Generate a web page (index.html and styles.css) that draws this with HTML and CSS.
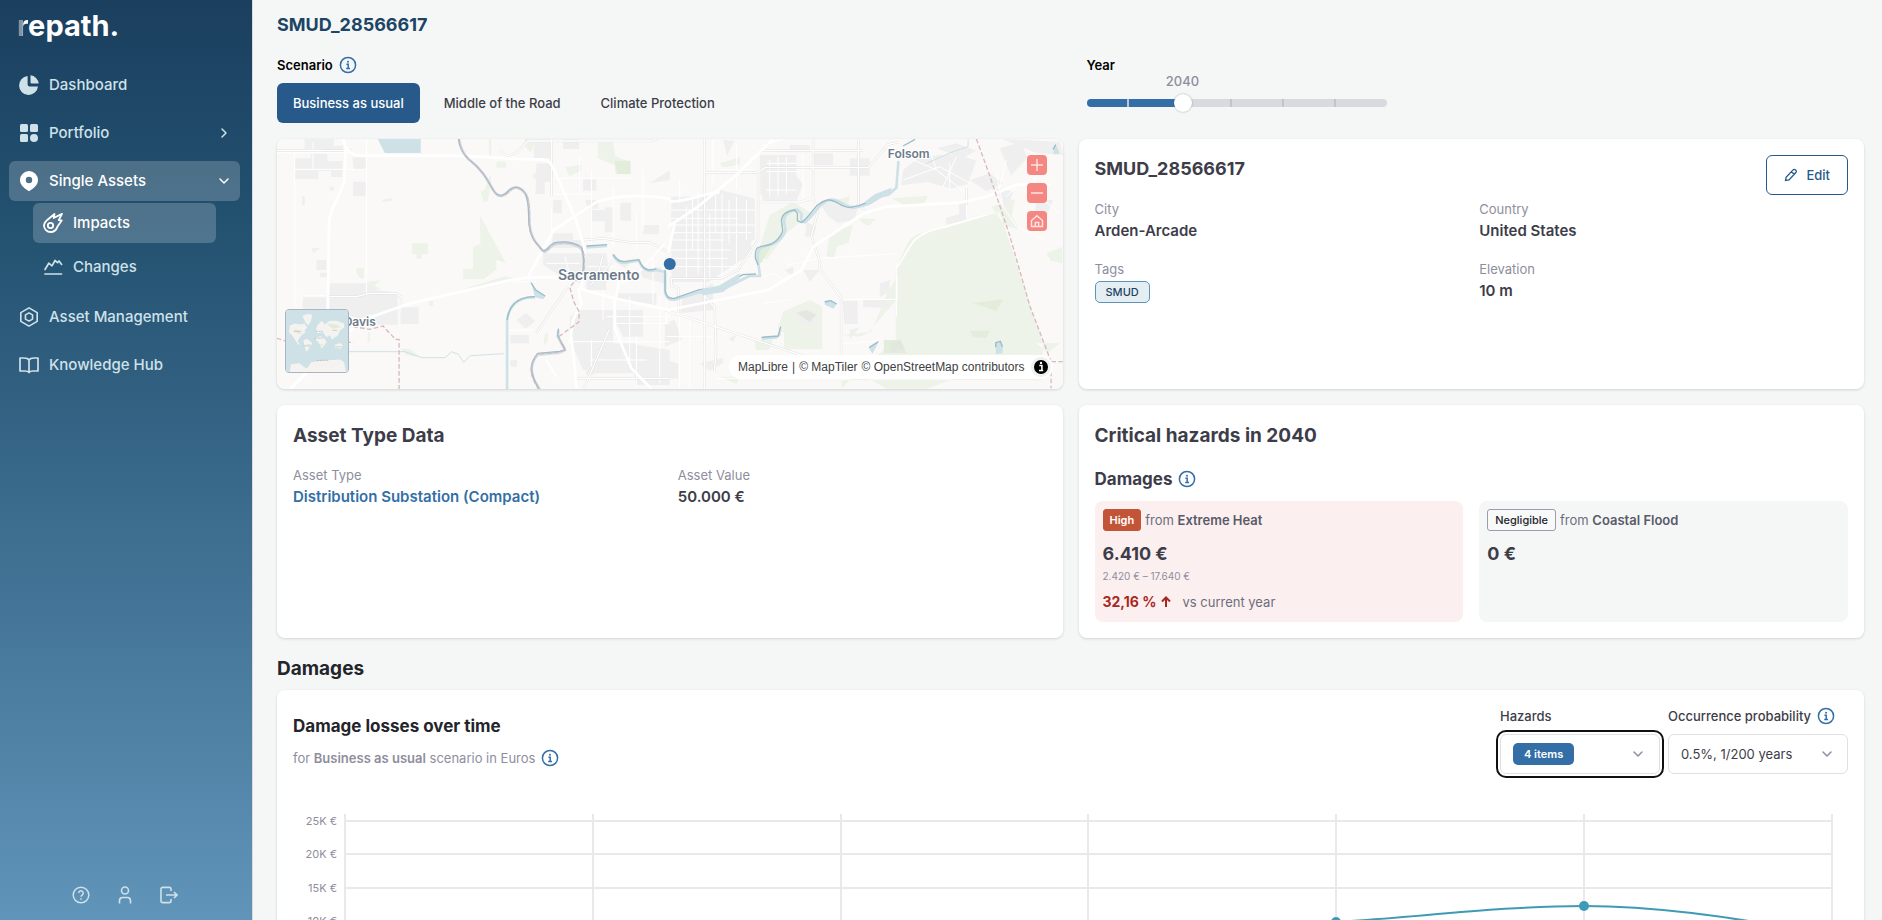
FILE: index.html
```html
<!DOCTYPE html>
<html lang="en">
<head>
<meta charset="utf-8">
<meta name="viewport" content="width=device-width, initial-scale=1">
<title>SMUD_28566617</title>
<link rel="stylesheet" href="styles.css">
</head>
<body>
<svg class="defs" aria-hidden="true">
  <symbol id="info" viewBox="0 0 18 18"><g fill="none" stroke="currentColor" stroke-width="1.5"><circle cx="9" cy="9" r="7.6"/><path d="M7.4 8.3h1.8v4.2M7.2 12.5h3.8"/></g><circle cx="9" cy="5.7" r="1" fill="currentColor"/></symbol>
  <symbol id="chevron" viewBox="0 0 12 12"><path d="M2 4l4 4 4-4" fill="none" stroke="currentColor" stroke-width="1.5" stroke-linecap="round" stroke-linejoin="round"/></symbol>
</svg>
<div class="app">
  <aside class="sidebar">
    <a class="logo" href="#"><span class="logo-r">r</span>epath.</a>
    <nav class="nav">
      <a class="nav-item" href="#"><svg class="nav-icon" viewBox="0 0 20 20"><path d="M8.6 1A9.5 9.5 0 1 0 19 11.4H10.4a1.8 1.8 0 0 1-1.8-1.8z" fill="currentColor"/><path d="M11.5.3A9.4 9.4 0 0 1 19.7 8.5H12.5a1 1 0 0 1-1-1z" fill="currentColor"/></svg>Dashboard</a>
      <a class="nav-item" href="#"><svg class="nav-icon" viewBox="0 0 20 20" fill="currentColor"><rect x="1" y="1" width="8" height="8" rx="1.5"/><rect x="11" y="1" width="8" height="8" rx="1.5"/><rect x="1" y="11" width="8" height="8" rx="1.5"/><circle cx="15" cy="15" r="4"/></svg>Portfolio<svg class="nav-arrow side" viewBox="0 0 12 12"><use href="#chevron"/></svg></a>
      <div class="nav-group">
        <a class="nav-item active" href="#"><svg class="nav-icon" viewBox="0 0 20 20"><path fill-rule="evenodd" d="M10 0a9 9 0 0 0-9 9c0 4.300 3.200 7.200 6 9.300L10 20.200l3-1.900c2.800-2.100 6-5 6-9.300a9 9 0 0 0-9-9zm0 5.800a3.200 3.200 0 1 1 0 6.400 3.200 3.200 0 0 1 0-6.400z" fill="currentColor"/></svg>Single Assets<svg class="nav-arrow" viewBox="0 0 12 12"><use href="#chevron"/></svg></a>
        <div class="subnav">
          <a class="nav-item active" href="#"><svg class="nav-icon" viewBox="0 0 20 20" fill="none" stroke="currentColor" stroke-width="1.800" stroke-linejoin="round"><path d="M1 12.500C1 10 2.500 8.500 4.500 6.700L11.500 1l-.8 4L19 .9l-3.300 6.300 3 .2-4.200 6.200C13.500 16.500 11 19 7.500 19 4 19 1 16 1 12.500z"/><circle cx="7.500" cy="12.500" r="2.700"/></svg>Impacts</a>
          <a class="nav-item" href="#"><svg class="nav-icon" viewBox="0 0 20 20" fill="none" stroke="currentColor" stroke-width="1.700" stroke-linecap="round" stroke-linejoin="round"><path d="M2 12.500l3.800-6.300 3.200 2.600L12 3.500l2.500 2.200L16 4l2.600 3.400M2 17h16.500"/></svg>Changes</a>
        </div>
      </div>
      <a class="nav-item" href="#"><svg class="nav-icon" viewBox="0 0 20 22" fill="none" stroke="currentColor" stroke-width="1.800" stroke-linejoin="round"><path d="M10 1l9 5.200v9.600L10 21l-9-5.200V6.200z"/><path d="M10 6.500l3.900 2.200v4.600L10 15.500l-3.900-2.200V8.700z"/></svg>Asset Management</a>
      <a class="nav-item" href="#"><svg class="nav-icon" viewBox="0 0 20 20" fill="none" stroke="currentColor" stroke-width="1.700" stroke-linejoin="round"><path d="M10 5C9 3.300 7 3 5 3H1v13h5c2 0 3.300.4 4 1.500.7-1.100 2-1.500 4-1.500h5V3h-4c-2 0-4 .3-5 2zM10 5v12"/></svg>Knowledge Hub</a>
    </nav>
    <div class="side-tools">
      <button class="tool" aria-label="Help"><svg viewBox="0 0 18 18" fill="none" stroke="currentColor" stroke-width="1.500"><circle cx="9" cy="9" r="7.800"/><path d="M6.800 7a2.200 2.200 0 1 1 3.500 1.800C9.300 9.500 9 9.800 9 10.700M9 12.300v1.500"/></svg></button>
      <button class="tool" aria-label="Account"><svg viewBox="0 0 18 18" fill="none" stroke="currentColor" stroke-width="1.600"><circle cx="9" cy="4.500" r="3.500"/><path d="M3.500 17.500v-2.700c0-2 1-3.300 3-3.300h5c2 0 3 1.300 3 3.300v2.700"/></svg></button>
      <button class="tool" aria-label="Log out"><svg viewBox="0 0 18 18" fill="none" stroke="currentColor" stroke-width="1.600"><path d="M11 5V3.200C11 2 10.400 1.400 9.200 1.400H2.800C1.600 1.400 1 2 1 3.200v11.600c0 1.200.6 1.800 1.800 1.800h6.400c1.200 0 1.800-.6 1.800-1.800V13M6 9h10.500M14 6l3 3-3 3"/></svg></button>
    </div>
  </aside>

  <main class="main">
    <h1 class="page-title">SMUD_28566617</h1>
    <section class="filters">
      <div>
        <div class="filter-label">Scenario <svg class="info"><use href="#info"/></svg></div>
        <div class="tabs">
          <button class="tab selected">Business as usual</button>
          <button class="tab">Middle of the Road</button>
          <button class="tab">Climate Protection</button>
        </div>
      </div>
      <div class="year">
        <label class="filter-label" for="year">Year</label>
        <div class="slider">
          <output class="slider-value" for="year">2040</output>
          <input class="range" id="year" type="range" min="2022" max="2080" value="2040">
        </div>
      </div>
    </section>

    <section class="cards">
      <article class="card map">
        <svg class="map-art" viewBox="0 0 786 250" preserveAspectRatio="xMidYMid slice" aria-hidden="true">
          <g transform="translate(-7 -9) scale(.33333)">
            <rect x="0" y="0" width="2400" height="800" fill="#fbf9f8"/>
            <g fill="#edf3e8">
              <path d="M630 255l78 143-28-8v28l-38 30h-62v-32h30v-66l22-8z"/>
              <path d="M426 340h48v32h-18v14h-16v-14h-14zM555 485l150-46 45 8-190 42zM288 455l46-4-20 16 22 10-50 2zM340 208l24-4 6 8-34 4zM657 27h8v62l-8-20zM765 27h26v30l-10 10-16-20zM680 95h28v18h-28zM664 130l-20 50-12 5 10 32 12-4 10-46zM790 130h24v16h-24zM260 414h22v30h-10l-12-14zM126 354h24l-20 18zM960 565l20 8v22l-20-8zM950 712l34-4-10 26-26 2zM825 612l10-6-2 30-12 10zM985 35h45l6 42 46 20v36h-44l-4-28-50-20zM888 112l48-8-2 18-36 16zM390 655l30 2 35 26-45-8zM294 606h6v32h-6zM478 512h12v16h-12zM1035 395l60-10-30 30z"/>
              <path d="M2190 247l-180 48c-35 10-70 10-95 40l-37 80v215l-60 50-103 95v-24h600L2320 640zM1540 545l80-35 38 20v128h-115v-50l-20-10zM1680 310l70-26-14 55-34 10-10 36-22-6zM1500 255l70-40 55 35-75 60-60 80-25-25zM1205 250l60-42 70-20-80 60-50 20zM1865 205l110-8-10 20-50 14zM1768 265l50 2-20 20-20-8zM2205 75l50-40 18 50-40 40zM2165 230l70-22-8 50 20 40-40-10zM2330 370l48-20v50l-35-8zM1715 615l90-10 45-110 34-60v70l-90 105-24 10zM1455 630h55l-12 30h-40zM1670 218l70-20-5 30-55 10zM1350 100l60-18v22l-50 8zM1800 748h250l-80 28h-120zM2300 640l70 0-35 30zM1350 740h60l-10 22z"/>
            </g>
            <g fill="#e2eedb"><path d="M1034 92h48v40h-40zM1460 352h42l-28 48-14-6zM1842 630h40l30 40h-70zM2110 520l90-12-20 36zM2100 602h60l-10 22-40-2zM960 568h18v18h-18z"/></g>
            <g fill="#efeff0">
              <path d="M104 27h88v20h28v20h-60v-10h-56zM75 85h48v-14h50v22h45v48h-34v-18h-38v24h-70zM248 82h40v38h-36zM250 155h38v44h-38zM97 198h8v28h-8zM140 390h30v30h-30zM150 428h22v14h-22zM180 170h12v12h-12zM100 502h70v34h-36l-10 14-26-16zM180 460h110l30 20 64 8v96h-70v-30h-20l-20 12-96-20zM392 532h55v50h-55z"/>
              <path d="M792 27h52v58h-52zM800 100h45v56h-20v36h-28zM880 27h48v30h-48zM850 210h26v40h-26zM940 148h40v34h-40zM946 210h40v26h-30zM965 240h40v34h-40zM1005 232h25v75h-25zM1052 218h32v54h-32zM850 310h60v20h34v24h-100zM820 370h120v90l-50-10-70-45zM920 370h90l10 70h-70zM950 440h60v40h-60zM1040 490h120v35l-120-20zM900 560l30-20h100v180h-90l-40-90zM1040 540h80v80h-60l-20-40zM950 640h150v90H950zM722 615h56v25h-56zM740 570l30-22 26 26-28 22zM1070 640l130 20v105h-100zM722 690h20v20h-20zM1110 420l60-10 20 22v30l-70-18zM1120 285h48v28h-48zM1140 160l60-40v30z"/>
              <path d="M1205 200h110l30-22 110 28v120l-130 100-110 16-10-130zM1205 340h150l90-10v40l-130 86h-110zM1240 500l90-40v80l-100 10zM1350 200h50v90h-50zM1470 75h110v64l20 24-20 50h-90l-18-20zM1478 150h95v60h-95zM1560 45h60v22h-60zM1630 70h60v36h-60zM1740 85h60v52h-60zM1650 220l60-5 55 14-10 40-50 10-30-20zM1610 275l30 15-10 30h-24zM1900 120l50-40 110-8 60 20-26 70-50 14-70-20-80 10zM2000 55l60-15 60 22-40 22zM2090 220v50l-60 14-2-20 40-12v-32zM2100 150l60-20 40 30-50 24zM2190 55l60-18 20 40-46 60zM2180 175l50 10-20 60zM2270 160h40v46l-35-10zM2300 210h50l-20 50-35-10zM2200 27l170 8 10 40-80-6zM1575 545l50-8 20 18-22 30-36-10zM1718 512h46v70h-40zM1780 510h65l15 25-80-4zM1830 460l30-10v35l-30 16zM1740 600l30-8-30 36zM1600 420h50l-30 36zM1545 420l25-10v30zM1376 625l24-10-10 22zM1185 580l30-10 22 60-52 20zM1185 690l40 10v46h-40zM1290 700l70-16v16l-40 22zM1360 30l34 2-22 46z"/>
            </g>
            <g fill="#e3e8df"><path d="M1862 640l30-12 14 30-40 10z"/><path d="M1580 548l30-8 30 14-20 22z"/></g>
            <g fill="none" stroke="#fff" stroke-width="3">
              <path d="M75 60v465M130 35v85M290 27v470M75 118h215M100 497h75M21 68h230M845 145h240M845 192h120M845 235v65M965 120v240M1030 170v180M930 80v110M1100 250v110M1120 120v180M900 635h300M960 690h170M1035 580h165M965 630v80M1000 480v90M1080 500v200M1100 620v155M760 500h60M730 455h70M720 600h70M885 380l20 70M830 400h100M950 410h90M1010 560h190M1150 380v140M1170 500v260"/>
              <path d="M1205 240h250M1205 265h200M1205 285h250M1250 230v220M1268 210v150M1285 180v250M1320 250v200M1338 190v120M1357 190v270M1378 210v130M1400 200v200M1430 210v120M1205 308h240M1205 330h160M1205 360h180M1205 385h170M1210 410h220M1350 120h110M1230 150v70M1400 40v140M1330 27v130M1500 90v110M1525 80v120M1550 80v110M1600 60v160M1490 100h90M1490 125h100M1490 180h90M1620 60h70M1190 480v100M1230 510v265M1260 560v215M1190 620h140M1480 520l80-10M1550 405l100-20 230-14M1880 400v160M1720 508h165M1715 640l110-6M2090 200v60M2040 180v-80M1930 90l70 30 90 70M1980 60l20 60M2060 80l-40 90M1900 150l110-40 90 50M2180 130l20 100 40 60 80 40M2210 90l-20 80M2250 160l-40 40M2290 130l20 70 60 50M1700 745h500M1340 745h400M1540 450l-30-20-30 10"/>
            </g>
            <g fill="none" stroke="#e1e1e1" stroke-width="7">
              <path d="M21 62h226M170 500h90l40-10h80l14 10v50M690 60l20 18 30-10 35-35h370l20-8M940 330l60-5 80 12h60l60 32M1000 375l-16 60-20 30M1042 375l-46 56M895 470l-70 100-25 40M1018 600l-75 175M845 27v170M1305 27v760M1630 27v180l15 35-20 75 26 80-2 20 65 85v220M1766 27v200l22 12M1305 127h160l20-14h310l60-70 30-6M1465 130v200l-60 90-50 26h-150v20l22 10v80M1300 490l35 45 4 130-5 60M1470 62h310M1470 216h120l40-12M2090 175v50M1185 540l500 165M915 745h285"/>
            </g>
            <g fill="none" stroke="#fff" stroke-width="4">
              <path d="M21 62h226M170 500h90l40-10h80l14 10v50M690 60l20 18 30-10 35-35h370l20-8M940 330l60-5 80 12h60l60 32M1000 375l-16 60-20 30M1042 375l-46 56M895 470l-70 100-25 40M1018 600l-75 175M845 27v170M1305 27v760M1630 27v180l15 35-20 75 26 80-2 20 65 85v220M1766 27v200l22 12M1305 127h160l20-14h310l60-70 30-6M1465 130v200l-60 90-50 26h-150v20l22 10v80M1300 490l35 45 4 130-5 60M1470 62h310M1470 216h120l40-12M2090 175v50M1185 540l500 165M915 745h285"/>
            </g>
            <g fill="none" stroke="#fff" stroke-width="8">
              <path d="M220 27c8 30 20 50 55 50h260c100 0 160 10 270 11 35 0 38 10 50 36l65 150 24 80-8 120M228 50l-4 100c-10 50-45 80-46 130l-4 260M62 777l60-60 150-145 150-52 300-70 60-8h100M772 445l80-145 130-85c60-20 150-22 218-8M925 475l110 30 160 35 300-60 100-60 36-70 60-40 90-60 70-20 220-12 80-18 90-36h100M1035 505v90l50 120 60 62M905 620l16 155M1200 215c60 0 110-28 150-28M1195 290l90-60 60-50 55-45 110-108M1195 370l20-90M1048 450l-10 60M900 640l10-70 25-50-10-45"/>
            </g>
            <path fill="none" stroke="#fff" stroke-width="5" d="M1185 340l-80 90-50 30M1880 415l50-80c30-30 60-35 100-45l120-35M830 690l30 50M1500 40l60-20"/>
            <path fill="#cde1e6" d="M324 27h129v42H345z"/>
            <g fill="none" stroke-linejoin="round">
              <path stroke="#cde1e6" stroke-width="8" d="M568 27c4 30 15 48 30 62 40 30 55 60 75 95 15 22 30 15 45 0 18-18 35-12 50 8 14 24 9 60 12 95 4 40 22 55 40 76 10 8 18-12 34-20 30-6 60-2 80 12 12 20 8 50 6 72M712 777V570c4-30 20-70 84-68M866 600l-2 20 22 40-16 8-66 6c-25 30-25 60 6 103M1030 375c10 18 20 24 35 24l42-8 8 16c15 20 30 18 45 13l26 6v60c4 20 12 24 28 23l75-22 60-4 90-45h32l-6-40c-6-40 6-48 30-52 35-5 50-35 52-45l-4-30c2-20 20-30 40-32l12 12v20l10 6c30-20 40-60 78-68 30-2 40 25 70 24 40-6 60-20 80-34l25-6 22-20 6-80M950 352l62-4"/>
              <path stroke="#9cbccb" stroke-width="4" d="M566 27c4 30 15 46 30 60 40 30 55 60 75 95 15 22 30 15 45 0 18-18 35-12 50 8 14 24 9 60 12 95 4 40 22 55 40 76 10 8 18-14 34-22 30-6 60-2 82 12 10 20 8 50 6 72"/>
              <path stroke="#9cbccb" stroke-width="4" d="M712 570c4-30 20-70 84-70M866 596l-2 20 22 44-16 4-66 6c-25 30-25 60 4 107M1030 373c10 18 20 22 35 22l42-6 8 16c15 20 30 16 45 11M1186 420v62c4 20 12 24 28 23l75-26 60-4 70-41 40-2M1465 405l-8-20c-2-34 6-34 30-38 35-5 50-35 52-45l-4-30c2-20 20-30 40-32l8 10v22l12 6c30-20 40-60 78-68 30-2 40 25 70 22 40-6 60-20 80-34l25-8M950 348l62-4M1900 48l36-20"/>
              <path stroke="#cde1e6" stroke-width="3" d="M236 665h170l50 18h70l20-18 20 8 16 24 20-20 100-6M1970 100l80-35 45-15v-22"/>
              <path stroke="#d9b9bd" stroke-width="4" stroke-dasharray="14 7" d="M568 27c4 30 15 48 30 62 40 30 55 60 75 95 15 22 30 15 45 0 18-18 35-12 50 8 14 24 9 60 12 95 4 40 22 55 40 76 10 8 18-14 34-22 30-6 60-2 82 12 10 20 8 50 6 72l-42 46 12 44 16 30v30l-62 46 22 38-20 8-66 6c-25 30-25 60 6 107M21 625l40 12h190M250 590l50 8 40-10 20 22 18 18h10v150M2120 27l40 110 60 180 60 210 64 168v80M2345 695h34"/>
            </g>
            <g fill="#cde1e6"><path d="M784 458l14 20 30 20-8 10-24-6zM1290 480l60-14 60-36v16l-50 40-60 10zM1785 215l30-22 50-20v14l-50 26-20 14zM1475 622l50-4 8-28v26l-12 10-44 4zM1665 512l18-2 18 12-10 14-26-12zM1798 655l28-20-8 18-10 18zM2178 640l14-8 8 16-2 22-20 2zM2350 55l8-12 12 28-18 2z"/></g>
            <g fill="none" stroke="#9cbccb" stroke-width="4"><path d="M784 458l14 22 28 18M1475 622l50-4 8-28M1665 516l18-4 18 10M1798 653l28-18M2178 652v-14l14-4 6 16M2350 58l8-14"/></g>
          </g>
          <g class="map-labels">
            <text x="322" y="141" font-size="14" text-anchor="middle">Sacramento</text>
            <text x="83" y="187" font-size="12" text-anchor="middle">Davis</text>
            <text x="632" y="19" font-size="12" text-anchor="middle">Folsom</text>
          </g>
          <circle cx="393" cy="125" r="6" fill="#336fa6"/>
        </svg>
        <svg class="minimap" viewBox="0 0 64 64" aria-hidden="true">
          <rect width="64" height="64" fill="#cde1e6"/>
          <g fill="#f4f3ef"><path d="M4 16l5-2 6 1 4-1 3 4-3 3 1 2-4 3-2 3-2 3 2 3-1 1-3-4-3-5-4-4zM17 6l5-2 5 1-1 6-3 5-3-3zM18 31l4-1 5 4-2 4-3 4-1 1-2-6zM31 19l2-4 4-4 3 4 5-4 7 0 8 3v4l-4 3-3 6-3 1-2 3-3-5-3 2-4-5-6 1zM31 28l5-1 4 3 2 3-3 4-2 3-3-6-3-3zM50 36l6-2 3 3-2 3-7-1zM4 64l1-8 9-1 5 4 3 1 4-6 12-2 18-1 4 3 2 10z"/></g>
          <g fill="#e4eadb"><path d="M8 20l6 1 2 4-5-1zM21 35l4 0-1 4zM42 14l10 1 5 3-9 1zM35 35l3 0-1 3z"/></g>
          <path fill="none" stroke="#a9aab2" stroke-width=".7" stroke-dasharray="1 .5" d="M8 22h8M31 22h7M48 21h5M30 29h8M18 37h7M50 38h9M32 52h12"/>
        </svg>
        <div class="map-tools">
          <button class="map-btn" aria-label="Zoom in"><svg viewBox="0 0 20 20"><path d="M4 10h12M10 4v12"/></svg></button>
          <button class="map-btn" aria-label="Zoom out"><svg viewBox="0 0 20 20"><path d="M4 10h12"/></svg></button>
          <button class="map-btn" aria-label="Reset view"><svg viewBox="0 0 20 20"><path d="M4.500 15.500V9.500L10 4.700l5.500 4.800v6zM8.300 15.500v-4h3.400v4"/></svg></button>
        </div>
        <div class="attribution"><a href="#">MapLibre</a> | <a href="#">© MapTiler</a> <a href="#">© OpenStreetMap contributors</a>
          <svg class="attribution-icon" viewBox="0 0 20 20"><circle cx="10" cy="10" r="10" fill="#f0f0f0"/><circle cx="10" cy="10" r="7" fill="#000"/><path d="M8.300 8.500h2.600v4.200M8 13.500h4.200" stroke="#fff" stroke-width="1.600" fill="none"/><circle cx="10" cy="5.900" r="1.200" fill="#fff"/></svg>
        </div>
      </article>

      <article class="card">
        <header class="card-head">
          <h2 class="asset-name">SMUD_28566617</h2>
          <button class="edit"><svg viewBox="0 0 14 14"><path d="M1.500 12.500l.6-3.200 6.700-7.200a1.900 1.900 0 0 1 2.900 2.600L5 11.900zM7.500 3.700l2.700 2.500"/></svg>Edit</button>
        </header>
        <dl class="facts">
          <div><dt>City</dt><dd>Arden-Arcade</dd></div>
          <div><dt>Country</dt><dd>United States</dd></div>
          <div><dt>Tags</dt><dd><span class="tag">SMUD</span></dd></div>
          <div><dt>Elevation</dt><dd>10 m</dd></div>
        </dl>
      </article>

      <article class="card">
        <h2 class="card-title">Asset Type Data</h2>
        <dl class="facts spaced">
          <div><dt>Asset Type</dt><dd><a class="link" href="#">Distribution Substation (Compact)</a></dd></div>
          <div><dt>Asset Value</dt><dd>50.000 €</dd></div>
        </dl>
      </article>

      <article class="card">
        <h2 class="card-title">Critical hazards in 2040</h2>
        <h3 class="subhead">Damages <svg class="info"><use href="#info"/></svg></h3>
        <div class="hazards">
          <section class="hazard high">
            <p class="hazard-top"><span class="badge">High</span><span>from <b>Extreme Heat</b></span></p>
            <p class="amount">6.410 €</p>
            <p class="interval">2.420 € – 17.640 €</p>
            <p class="change"><b>32,16 %</b><svg viewBox="0 0 12 12"><path d="M6 11V2M2 5.500L6 1.500l4 4"/></svg><span>vs current year</span></p>
          </section>
          <section class="hazard">
            <p class="hazard-top"><span class="badge outline">Negligible</span><span>from <b>Coastal Flood</b></span></p>
            <p class="amount">0 €</p>
          </section>
        </div>
      </article>
    </section>

    <h2 class="section-title">Damages</h2>
    <section class="card chart-card">
      <header class="chart-head">
        <div>
          <h3 class="chart-title">Damage losses over time</h3>
          <p class="chart-sub"><span>for <b>Business as usual</b> scenario in Euros</span><svg class="info"><use href="#info"/></svg></p>
        </div>
        <div class="controls">
          <div class="field hazards-field">
            <span class="field-label" id="hazards-label">Hazards</span>
            <button class="picker focused" aria-haspopup="listbox" aria-labelledby="hazards-label"><span class="chip">4 items</span><svg class="caret"><use href="#chevron"/></svg></button>
          </div>
          <div class="field probability-field">
            <label class="field-label" for="probability">Occurrence probability <svg class="info"><use href="#info"/></svg></label>
            <div class="picker-wrap"><select class="picker" id="probability"><option>0.5%, 1/200 years</option></select><svg class="caret"><use href="#chevron"/></svg></div>
          </div>
        </div>
      </header>
      <svg class="chart" viewBox="0 0 1555 210" role="img" aria-label="Damage losses over time">
        <g fill="none" stroke="#e9e9ea" stroke-width="2">
          <path d="M52 8H1540M52 41H1540M52 75H1540M52 108H1540M52 141H1540M52 174H1540"/>
          <path d="M52 1V174M300 1V174M548 1V174M795 1V174M1043 1V174M1291 1V174M1539 1V174"/>
        </g>
        <g class="axis" text-anchor="end"><text x="44" y="12">25K €</text><text x="44" y="45">20K €</text><text x="44" y="79">15K €</text><text x="44" y="112">10K €</text></g>
        <path d="M795 150C880 135 960 114 1043 109S1210 93 1291 93S1450 107 1539 121" fill="none" stroke="#3f9bb5" stroke-width="2"/>
        <g fill="#3f9bb5"><circle cx="1043" cy="109" r="5"/><circle cx="1291" cy="93" r="5"/></g>
      </svg>
    </section>
  </main>
</div>
</body>
</html>
```

FILE: styles.css
```css
* { box-sizing: border-box; }
body, h1, h2, h3, p, dl, dd { margin: 0; }
body {
  font-family: Inter, "Liberation Sans", sans-serif;
  font-size: 13px;
  line-height: 20px;
  color: #3d3d49;
  background: #f5f7f7;
}
a { color: inherit; text-decoration: none; }
button, select, input { font: inherit; }
button { cursor: pointer; }
.defs { display: none; }
.app { display: flex; height: 100vh; overflow: hidden; }

.sidebar {
  width: 253px;
  flex: none;
  display: flex;
  flex-direction: column;
  padding: 8px 12px 16px 9px;
  color: #cfe1e9;
  background: linear-gradient(#1b3f5f, #235170 24%, #316081 43%, #6094b9);
  border-right: 1px solid #d9dbe0;
}
.logo {
  height: 40px;
  margin: 0 0 17px 8px;
  color: #fff;
  font-size: 29px;
  font-weight: 700;
  line-height: 36px;
}
.logo-r {
  color: transparent;
  background: linear-gradient(90deg, #8194a5 45%, #fff 70%);
  background-clip: text;
  -webkit-background-clip: text;
}
.nav { display: flex; flex-direction: column; gap: 8px; }
.nav-item {
  display: flex;
  align-items: center;
  gap: 10px;
  height: 40px;
  padding: 0 10px;
  border-radius: 6px;
  font-size: 15px;
  font-weight: 500;
}
.nav-item.active { color: #fff; background: rgba(255, 255, 255, .2); }
.nav-icon { width: 20px; height: 20px; flex: none; overflow: visible; }
.nav-arrow { width: 12px; height: 12px; margin-left: auto; }
.nav-arrow.side { transform: rotate(-90deg); }
.subnav { display: flex; flex-direction: column; gap: 4px; padding: 2px 24px; }
.side-tools { display: flex; justify-content: center; gap: 26px; margin-top: auto; }
.tool { width: 18px; height: 18px; padding: 0; border: 0; color: inherit; background: none; }
.tool svg { display: block; width: 18px; height: 18px; }

.main { flex: 1; min-width: 0; padding: 11px 18px 0 24px; }
.page-title, .asset-name { font-size: 18px; font-weight: 700; line-height: 28px; }
.page-title { color: #1c4464; }
.info { width: 18px; height: 18px; flex: none; color: #336fa6; }
.filters { display: grid; grid-template-columns: 1fr 1fr; gap: 16px; padding: 16px 0; }
.filter-label { display: flex; align-items: center; gap: 6px; color: #000; font-weight: 600; }
.tabs { display: flex; gap: 8px; margin-top: 8px; }
.tab {
  height: 40px;
  padding: 0 16px;
  border: 0;
  border-radius: 6px;
  color: #3d3d49;
  background: none;
  font-weight: 500;
}
.tab.selected { color: #fff; background: #275a8a; }
.year { padding-left: 8px; }
.slider { display: grid; width: 300px; }
.slider-value {
  width: 36px;
  margin: -4px 0 0 78px;
  color: #8e8e9d;
  text-align: center;
  font-weight: 500;
}
.range { width: 100%; height: 20px; margin: 2px 0 0; appearance: none; -webkit-appearance: none; background: none; }
.range::-webkit-slider-runnable-track {
  height: 8px;
  border-radius: 4px;
  background:
    linear-gradient(#c3c3cb, #c3c3cb) 40px 0 / 2px 8px no-repeat,
    linear-gradient(#c3c3cb, #c3c3cb) 143px 0 / 2px 8px no-repeat,
    linear-gradient(#c3c3cb, #c3c3cb) 195px 0 / 2px 8px no-repeat,
    linear-gradient(#c3c3cb, #c3c3cb) 247px 0 / 2px 8px no-repeat,
    linear-gradient(#336fa6, #336fa6) 0 0 / 96px 8px no-repeat,
    #d9dadf;
}
.range::-webkit-slider-thumb {
  -webkit-appearance: none;
  width: 18px;
  height: 18px;
  margin-top: -5px;
  border-radius: 50%;
  background: #fff;
  box-shadow: 0 0 2px rgba(0, 0, 0, .35);
}

.cards { display: grid; grid-template-columns: 1fr 1fr; grid-template-rows: minmax(250px, auto) auto; gap: 16px; }
.card {
  position: relative;
  min-width: 0;
  padding: 16px;
  border-radius: 8px;
  background: #fff;
  box-shadow: 0 1px 3px rgba(0, 0, 0, .14);
}
.card-head { display: flex; justify-content: space-between; margin-bottom: 4px; }
.card-title { font-size: 19px; font-weight: 700; line-height: 30px; }
.facts { display: grid; grid-template-columns: 1fr 1fr; gap: 16px; }
.facts.spaced { margin-top: 14px; }
.facts dt { color: #8e8e9d; }
.facts dd { font-size: 15px; font-weight: 600; line-height: 24px; }
.link { color: #336fa6; }
.tag {
  display: block;
  width: max-content;
  margin-top: 2px;
  padding: 0 10px;
  border: 1px solid #5c94b8;
  border-radius: 5px;
  color: #1c4464;
  background: #e5eef3;
  font-size: 11px;
  font-weight: 500;
  line-height: 20px;
}
.edit {
  display: flex;
  align-items: center;
  gap: 8px;
  height: 40px;
  padding: 0 17px;
  border: 1px solid #275a8a;
  border-radius: 6px;
  color: #275a8a;
  background: #fff;
  font-weight: 500;
}
.edit svg { width: 14px; height: 14px; fill: none; stroke: currentColor; stroke-width: 1.3; }

.map { padding: 0; overflow: hidden; }
.map-art { position: absolute; inset: 0; width: 100%; height: 100%; }
.map-labels {
  fill: #6d7a89;
  stroke: #fff;
  stroke-width: 2px;
  paint-order: stroke;
  font-weight: 600;
}
.minimap {
  position: absolute;
  left: 8px;
  bottom: 16px;
  width: 64px;
  height: 64px;
  border: 1px solid #a9b5c4;
  border-radius: 4px;
}
.map-tools { position: absolute; top: 16px; right: 16px; display: grid; gap: 8px; }
.map-btn { width: 20px; height: 20px; padding: 0; border: 0; border-radius: 4px; background: #f58782; }
.map-btn svg { display: block; fill: none; stroke: #ffe4e2; stroke-width: 1.4; }
.attribution {
  position: absolute;
  right: 10px;
  bottom: 10px;
  display: flex;
  align-items: center;
  gap: 4px;
  height: 24px;
  padding: 0 2px 0 9px;
  border-radius: 12px;
  background: #fff;
  color: #404040;
  font: 12px/20px "Liberation Sans", Arial, sans-serif;
}
.attribution-icon { width: 20px; height: 20px; margin-left: 2px; }

.subhead { display: flex; align-items: center; gap: 6px; margin: 16px 0 10px; font-size: 17px; font-weight: 700; line-height: 24px; }
.hazards { display: grid; grid-template-columns: 1fr 1fr; gap: 16px; }
.hazard { padding: 8px; border-radius: 8px; background: #f5f7f7; }
.hazard.high { background: #fcefef; }
.hazard-top { display: flex; align-items: center; gap: 4px; color: #6d6d7c; }
.hazard-top b { color: #5a5a69; font-weight: 600; }
.badge {
  padding: 0 6px;
  border: 1px solid #c25438;
  border-radius: 3px;
  color: #fff;
  background: #c25438;
  font-size: 11px;
  font-weight: 600;
  line-height: 20px;
}
.badge.outline { border-color: #9c9caa; color: #24242b; background: #f8f9f9; font-weight: 500; padding: 0 7px; }
.amount { margin-top: 9px; font-size: 18px; font-weight: 700; line-height: 28px; }
.interval { color: #8e8e9d; font-size: 10px; line-height: 16px; }
.change { display: flex; align-items: center; gap: 4px; margin-top: 6px; color: #6d6d7c; line-height: 24px; }
.change b { color: #a8281f; font-size: 14px; font-weight: 700; }
.change svg { width: 12px; height: 12px; margin-right: 6px; fill: none; stroke: #a8281f; stroke-width: 2; }

.section-title { margin: 17px 0 7px; color: #24242b; font-size: 19px; font-weight: 700; line-height: 28px; }
.chart-head { display: flex; justify-content: space-between; }
.chart-title { margin-top: 8px; color: #24242b; font-size: 17px; font-weight: 700; line-height: 24px; }
.chart-sub { display: flex; align-items: center; gap: 6px; margin-top: 10px; color: #8e8e9d; }
.chart-sub b { font-weight: 600; }
.controls { display: flex; gap: 8px; }
.field-label { display: flex; align-items: center; gap: 6px; margin-bottom: 8px; font-weight: 500; }
.hazards-field { width: 160px; }
.probability-field { width: 180px; }
.picker {
  display: flex;
  align-items: center;
  width: 100%;
  height: 40px;
  padding: 0 12px;
  border: 1px solid #e0e0e3;
  border-radius: 6px;
  color: #3d3d49;
  background: #fff;
  appearance: none;
  -webkit-appearance: none;
}
.picker.focused { outline: 2px solid #101012; outline-offset: 2px; }
.picker-wrap { position: relative; }
.caret { width: 12px; height: 12px; margin: 0 3px 0 auto; color: #8e8e9d; }
.picker-wrap .caret { position: absolute; right: 12px; top: 14px; pointer-events: none; }
.chip { padding: 0 11px; border-radius: 5px; color: #fff; background: #336fa6; font-size: 11px; font-weight: 600; line-height: 22px; }
.chart { display: block; width: 100%; margin-top: 39px; }
.axis { fill: #8e8e9d; font-size: 11px; }
```
